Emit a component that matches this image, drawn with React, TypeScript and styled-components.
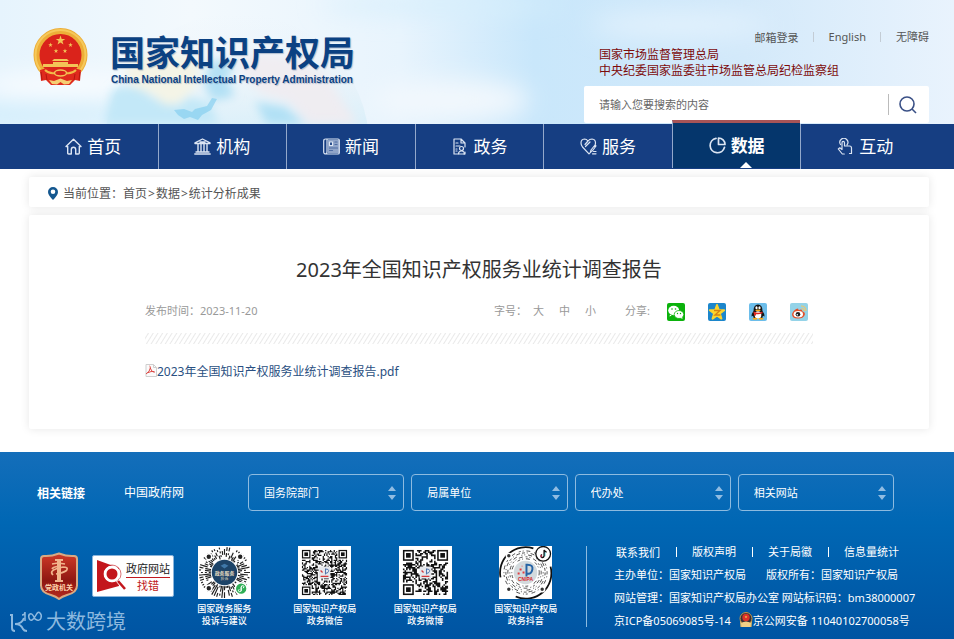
import React from "react";
import styled, { createGlobalStyle, css } from "styled-components";

const GlobalStyle = createGlobalStyle`
  * { box-sizing: border-box; }
  body {
    margin: 0;
    background: #fff;
    font-family: "Noto Sans", "Noto Sans CJK SC", sans-serif;
    font-size: 12px;
    color: #555;
  }
  a { color: inherit; text-decoration: none; }
  input, select, button { font-family: inherit; }
`;

/* ---------- header ---------- */

const Header = styled.header`
  position: relative;
  display: flex;
  justify-content: space-between;
  height: 124px;
  padding: 0 25px 0 33px;
  overflow: hidden;
`;

const Sky = styled.svg`
  position: absolute;
  inset: 0;
  width: 100%;
  height: 100%;
`;

const Brand = styled.a`
  position: relative;
  display: flex;
  align-items: flex-start;
  gap: 22px;
  padding-top: 28px;
`;

const BrandText = styled.span`
  display: flex;
  flex-direction: column;
  padding-top: 2px;
  color: #0b4182;
  text-shadow: 1px 1px 1px rgba(60, 90, 130, 0.35);
`;

const BrandName = styled.span`
  font: 700 35px/42px "Noto Sans CJK SC", sans-serif;
`;

const BrandLatin = styled.span`
  padding-left: 1px;
  font: 700 10px/16px "Liberation Sans", sans-serif;
`;

const HeaderSide = styled.div`
  position: relative;
  display: flex;
  flex-direction: column;
  width: 345px;
  padding-top: 28px;
`;

const TopLinks = styled.nav`
  display: flex;
  justify-content: flex-end;
  align-items: center;
  height: 18px;
  font-size: 11px;
  color: #555;
`;

const TopLink = styled.a`
  & + & {
    margin-left: 14px;
    padding-left: 15px;
    border-left: 1px solid #c3ccd5;
    line-height: 10px;
  }
`;

const Agencies = styled.div`
  display: flex;
  flex-direction: column;
  align-items: flex-start;
  padding: 1px 0 0 15px;
  font-size: 12px;
  line-height: 16px;
  color: #7d0b0b;
`;

const SearchForm = styled.form`
  display: flex;
  align-items: center;
  height: 37px;
  margin-top: 7px;
  padding-left: 15px;
  border-radius: 2px;
  background: #fff;
`;

const SearchInput = styled.input`
  flex: 1;
  min-width: 0;
  padding: 0;
  border: 0;
  outline: 0;
  font-size: 11px;
  color: #555;
  background: transparent;
  &::placeholder { color: #666; opacity: 1; }
`;

const SearchButton = styled.button`
  width: 41px;
  height: 21px;
  padding: 0 0 0 10px;
  border: 0;
  border-left: 1px solid #bbb;
  background: transparent;
  text-align: left;
  svg { display: block; }
`;

/* ---------- main navigation ---------- */

const NavBar = styled.nav`
  position: relative;
  display: grid;
  grid-template-columns: repeat(7, 1fr);
  height: 45px;
  padding: 0 25px 0 29px;
  background: #163e82;
`;

const NavItem = styled.a<{ $active?: boolean }>`
  position: relative;
  display: flex;
  align-items: center;
  justify-content: center;
  gap: 5px;
  color: #fff;
  font-size: 17px;
  line-height: 45px;
  & + & { border-left: 1px solid #93a8cb; }
  svg { width: 17px; height: 17px; }
  ${(p) =>
    p.$active &&
    css`
      margin: -4px 0 1px;
      border-top: 3px solid #a75457;
      background: #05366c;
      font-weight: 700;
      &::after {
        content: "";
        position: absolute;
        bottom: 0;
        left: 67px;
        border: 6px solid transparent;
        border-top: 0;
        border-bottom-color: #fff;
      }
    `}
`;

/* ---------- content ---------- */

const Main = styled.main`
  display: flex;
  flex-direction: column;
  gap: 8px;
  padding: 8px 25px 23px 29px;
`;

const Card = styled.section`
  border-radius: 2px;
  background: #fff;
  box-shadow: 0 0 10px rgba(0, 0, 0, 0.1);
`;

const Crumbs = styled(Card).attrs({ as: "nav" })`
  display: flex;
  align-items: center;
  height: 30px;
  padding: 2px 19px 0;
  font-size: 12px;
  color: #555;
  svg { margin-right: 5px; }
`;

const CrumbMark = styled.span`
  padding: 0 1px;
`;

const Article = styled(Card).attrs({ as: "article" })`
  min-height: 214px;
  padding: 40px 116px 48px;
`;

const Title = styled.h1`
  margin: 0;
  font-size: 20px;
  line-height: 30px;
  font-weight: 400;
  text-align: center;
  color: #333;
`;

const Meta = styled.div`
  display: flex;
  align-items: center;
  justify-content: space-between;
  height: 20px;
  margin-top: 15px;
  padding-right: 5px;
  font-size: 11px;
  color: #999;
`;

const Tools = styled.div`
  display: flex;
  align-items: center;
`;

const SizeButton = styled.button`
  width: 11px;
  margin-right: 15px;
  padding: 0;
  border: 0;
  background: none;
  font-size: 11px;
  color: #999;
`;

const ToolLabel = styled.span<{ $wide?: boolean }>`
  width: ${(p) => (p.$wide ? 42 : 39)}px;
  margin-left: ${(p) => (p.$wide ? 14 : 0)}px;
  white-space: nowrap;
`;

const Shares = styled.div`
  display: flex;
  gap: 23px;
  padding-top: 4px;
`;

const ShareButton = styled.button`
  width: 18px;
  height: 18px;
  padding: 0;
  border: 0;
  background: none;
  svg { display: block; }
`;

const Hatch = styled.div`
  height: 11px;
  margin-top: 13px;
  background: repeating-linear-gradient(122deg, #fff 0 2px, #e9e9e9 3px, #fff 4px);
`;

const FileLink = styled.a`
  display: inline-flex;
  align-items: center;
  margin-top: 19px;
  font-size: 12px;
  line-height: 18px;
  color: #2a5082;
  svg { margin-top: -4px; }
`;

/* ---------- footer ---------- */

const Footer = styled.footer`
  position: relative;
  height: 187px;
  padding-top: 22px;
  color: #fff;
  background: linear-gradient(#146eba 0, #0067b4 70px, #0054a2 100%);
`;

const LinkRow = styled.div`
  display: flex;
  align-items: center;
  padding: 0 60px 0 37px;
  font-size: 12px;
`;

const RowTitle = styled.strong`
  width: 87px;
`;

const GovLink = styled.a`
  width: 124px;
  padding-bottom: 2px;
`;

const Selects = styled.div`
  flex: 1;
  display: grid;
  grid-template-columns: repeat(4, 1fr);
  gap: 7px;
`;

const SelectBox = styled.label`
  position: relative;
  display: block;
  svg {
    position: absolute;
    top: 12px;
    right: 7px;
    pointer-events: none;
  }
`;

const Select = styled.select`
  display: block;
  width: 100%;
  height: 37px;
  padding: 0 15px;
  appearance: none;
  border: 1px solid #8dbbe0;
  border-radius: 4px;
  background: transparent;
  font-size: 11px;
  color: #fff;
  option { color: #333; }
`;

const InfoRow = styled.div`
  display: grid;
  grid-template-columns: 40px 95px minmax(0, 402px) 1fr;
  align-items: start;
  margin-top: 35px;
  padding-left: 39px;
`;

const PartyBadge = styled.a`
  padding-top: 6px;
  svg { display: block; }
`;

const ErrorBadge = styled.a`
  display: flex;
  width: 82px;
  height: 42px;
  margin: 9px 0 0 13px;
  border: 1px solid #8ab5dc;
  border-radius: 2px;
  background: #fff;
`;

const ErrorText = styled.span`
  display: flex;
  flex-direction: column;
  width: 44px;
  margin: 5px 0 0 -3px;
  font-size: 11px;
  line-height: 16px;
  text-align: center;
  color: #222;
  white-space: nowrap;
`;

const ErrorAction = styled.span`
  border-top: 1px solid #c01a20;
  color: #c01a20;
`;

const Codes = styled.div`
  display: grid;
  grid-template-columns: repeat(4, 1fr);
`;

const Code = styled.figure`
  display: flex;
  flex-direction: column;
  align-items: center;
  margin: 0;
  svg { display: block; }
`;

const Caption = styled.figcaption`
  margin-top: 4px;
  font-size: 9px;
  line-height: 12px;
  font-weight: 500;
  text-align: center;
  white-space: pre-line;
`;

const Legal = styled.div`
  height: 81px;
  margin-left: 10px;
  padding-left: 27px;
  border-left: 1px solid #8dbbe0;
  font-size: 11px;
  white-space: nowrap;
`;

const LegalLinks = styled.div`
  display: flex;
  align-items: center;
  height: 11px;
  margin-bottom: 5px;
  padding-left: 2px;
`;

const LegalLink = styled.a`
  & + & {
    margin-left: 16px;
    padding-left: 15px;
    border-left: 1px solid #fff;
    line-height: 10px;
  }
`;

const LegalLine = styled.div<{ $gap?: number }>`
  display: flex;
  align-items: center;
  gap: ${(p) => p.$gap ?? 0}px;
  height: 23px;
`;

const Police = styled.a`
  display: flex;
  align-items: center;
`;

const Watermark = styled.div`
  position: absolute;
  left: 9px;
  bottom: 5px;
  display: flex;
  align-items: center;
  gap: 3px;
  font-size: 20px;
  line-height: 24px;
  color: #8db9df;
`;

/* ---------- drawings ---------- */

const star = (cx: number, cy: number, r: number) =>
  Array.from({ length: 10 }, (_, i) => {
    const a = -Math.PI / 2 + (i * Math.PI) / 5;
    const q = i % 2 ? r * 0.4 : r;
    return `${(cx + q * Math.cos(a)).toFixed(2)},${(cy + q * Math.sin(a)).toFixed(2)}`;
  }).join(" ");

const SkyDrawing = () => (
  <Sky viewBox="0 0 954 124" preserveAspectRatio="none" aria-hidden="true">
    <defs>
      <linearGradient id="sky" x2="1" y2="0">
        <stop offset="0" stopColor="#e6f4fd" />
        <stop offset=".2" stopColor="#f3f9fd" />
        <stop offset=".42" stopColor="#e8f4fd" />
        <stop offset=".56" stopColor="#c9e7fb" />
        <stop offset=".78" stopColor="#d3e9fa" />
        <stop offset="1" stopColor="#e9f3fd" />
      </linearGradient>
      <linearGradient id="globe" x2="0" y2="1">
        <stop offset="0" stopColor="#eaf3fa" stopOpacity="0" />
        <stop offset=".25" stopColor="#e9f2f8" stopOpacity=".7" />
        <stop offset=".45" stopColor="#d2edf9" />
      </linearGradient>
      <filter id="soft"><feGaussianBlur stdDeviation="12" /></filter>
      <filter id="slight"><feGaussianBlur stdDeviation="5" /></filter>
    </defs>
    <rect width="954" height="124" fill="url(#sky)" />
    <g filter="url(#soft)">
      <ellipse cx="40" cy="112" rx="110" ry="8" fill="#c4e9fb" />
      <ellipse cx="60" cy="88" rx="80" ry="12" fill="#fbfdff" />
      <ellipse cx="450" cy="100" rx="80" ry="20" fill="#f2f8fd" />
      <ellipse cx="440" cy="5" rx="120" ry="9" fill="#d7effc" />
      <ellipse cx="680" cy="25" rx="90" ry="12" fill="#e3f2fd" />
    </g>
    <circle cx="237" cy="145" r="132" fill="url(#globe)" opacity=".8" />
    <g filter="url(#slight)">
      <path d="M112 90q25-10 40 8l25 8 12-9 20 5 10 22H104z" fill="#c3e8f8" />
      <path d="M210 60l25 2-8 18 8 16-22 5-9-16zM255 102l30 5 20 17h-38z" fill="#a5dcf4" opacity=".8" />
      <path d="M125 68q25-22 58-12l16 8-3 22-17 17-14 2-12-11-22-8z" fill="#f4f4e6" />
      <path d="M235 60q40-16 90 14l33 50h-50l-18-22-30-9z" fill="#f1ecf1" opacity=".9" />
    </g>
    <path d="M174 110l10-1 8 3 3-3 12-3 5-8 5 1-6 11-9 5-4 5-8-3-6 2-6-4z" fill="#7dccef" opacity=".6" />
  </Sky>
);

const Emblem = () => (
  <svg width="55" height="59" viewBox="0 0 55 59" role="img" aria-label="国徽">
    <circle cx="27.500" cy="27" r="24" fill="#da231b" stroke="#edae38" strokeWidth="6" />
    <circle cx="27.500" cy="27" r="25" fill="none" stroke="#f6c95a" strokeWidth="2" />
    <path d="M7 42l7-2q13 8 27 0l7 2-1 11-5-1-5 5H18l-5-5-5 1z" fill="#df2a1d" />
    <g fill="#f3c357">
      <polygon points={star(27.5, 12.5, 5)} />
      <polygon points={star(17.5, 17, 2.4)} />
      <polygon points={star(37.5, 17, 2.4)} />
      <polygon points={star(23, 23, 2.4)} />
      <polygon points={star(32, 23, 2.4)} />
      <path d="M21 31h13l2 2H19zM20 34h15v2H20zM10 36h35v3H10z" />
    </g>
    <path d="M12 42q4 4 10 3M43 42q-4 4-10 3" stroke="#f1ba48" strokeWidth="2" fill="none" />
    <ellipse cx="27.500" cy="45" rx="6" ry="3" fill="#da231b" stroke="#f3c357" strokeWidth="1.500" />
    <path d="M16 52l5 1 6.500-2.500L34 53l5-1-3 4-5 .5-3.500-2.500L24 56.500l-5-.5z" fill="#f5cf73" />
    <path d="M8 44l1 8M47 44l-1 8M13 46l1 6M42 46l-1 6" stroke="#b3160f" strokeWidth="1" />
  </svg>
);

const navIcon = {
  viewBox: "0 0 17 17",
  fill: "none",
  stroke: "#dce5f3",
  strokeWidth: 1.4,
  strokeLinecap: "round" as const,
  strokeLinejoin: "round" as const,
  "aria-hidden": true,
};

const HomeIcon = () => (
  <svg {...navIcon}><path d="M1 8.500L8.500 1.300 16 8.500h-1.700V15q0 1-1 1h-2.600v-4.500q0-2.200-2.200-2.200T6.300 11.500V16H3.700q-1 0-1-1V8.500z" /></svg>
);
const HallIcon = () => (
  <svg {...navIcon}><path d="M1 4.800L8.500 1 16 4.800v.7H1zM2 14h13M.8 16h15.400M4 6v7.500M7 6v7.500M10 6v7.500M13 6v7.500M6 4h5" /></svg>
);
const NewsIcon = () => (
  <svg {...navIcon} strokeWidth={1.2}>
    <path d="M5 2h11v13H5z" fill="#8fa4c8" stroke="none" />
    <path d="M4 1h11q1.300 0 1.300 1.300v12.400q0 1.300-1.300 1.300H3q-2.300 0-2.300-2V3q0-2 2-2H4v12.500Q4 16 2.500 16" />
    <path d="M6.500 4h3v3.500h-3z" fill="#163e82" />
    <path d="M12 4h2M12 6.500h2M6.500 10h8M6.500 12.500h3" stroke="#4f6da4" />
  </svg>
);
const DocIcon = () => (
  <svg {...navIcon} strokeWidth={1.2}>
    <path d="M14 9V5l-4-4H3v15h4M13 16h1v-2M10 1v4h4M5 5h2M5 8h4M5 11h1M5 13h1" />
    <circle cx="10.500" cy="10.500" r="2" /><path d="M7.500 16q0-3 3-3t3 3z" />
  </svg>
);
const HeartIcon = () => (
  <svg {...navIcon} strokeWidth={1.2}>
    <path d="M8 3Q6.500 1 4.500 1 1 1.300 1 5q0 2 1.500 4L9 15.800l2-2M8 3q1.500-2 4-2 3.500.3 3.500 4 0 1.800-1 3.300M8 3L5 6.500M5.500 8.500L10 4M11 12l4-5 1 1-3.700 5-1.800.8zM13.500 13.500H16M12.500 15.800H16" />
  </svg>
);
const PieIcon = () => (
  <svg {...navIcon} strokeWidth={1.7}><path d="M7 1.300a7.300 7.300 0 1 0 8.500 9M9.500 1v6.500H16A6.500 6.500 0 0 0 9.500 1z" /></svg>
);
const TouchIcon = () => (
  <svg {...navIcon} strokeWidth={1.2}>
    <path d="M3.500 6.500A4 4 0 1 1 10 6.800M5 11.500V4.700q0-1.300 1.200-1.300t1.300 1.300V8h5q2 0 2 2v5.500h-2M5 11.500L2.800 9.800 1.300 11l4 5h2" />
  </svg>
);

const NAV = [
  { label: "首页", Icon: HomeIcon },
  { label: "机构", Icon: HallIcon },
  { label: "新闻", Icon: NewsIcon },
  { label: "政务", Icon: DocIcon },
  { label: "服务", Icon: HeartIcon },
  { label: "数据", Icon: PieIcon, active: true },
  { label: "互动", Icon: TouchIcon },
];

const WechatIcon = () => (
  <svg width="18" height="18" viewBox="0 0 18 18">
    <rect width="18" height="18" rx="2" fill="#0bb20c" />
    <path d="M3 11.500l-.5 2 2.200-1z" fill="#fff" />
    <ellipse cx="6.700" cy="7.500" rx="5.500" ry="4.700" fill="#fff" />
    <ellipse cx="12" cy="11.500" rx="4.800" ry="4" fill="#fff" stroke="#0bb20c" strokeWidth=".8" />
    <path d="M13 14.500l2.500 1.500-.4-2z" fill="#fff" />
    <g fill="#0bb20c"><circle cx="5" cy="6" r=".8" /><circle cx="8.500" cy="6" r=".8" /><circle cx="10.500" cy="10.500" r=".7" /><circle cx="13.500" cy="10.500" r=".7" /></g>
  </svg>
);
const QzoneIcon = () => (
  <svg width="18" height="18" viewBox="0 0 18 18">
    <rect width="18" height="18" rx="2" fill="#1c86cb" />
    <polygon points={star(9, 9.5, 7.5)} fill="#fcd42c" stroke="#fcd42c" strokeWidth="2" strokeLinejoin="round" />
    <path d="M6 7.500h6L7 12h5.500" fill="none" stroke="#d48212" strokeWidth="1.400" />
  </svg>
);
const QqIcon = () => (
  <svg width="18" height="18" viewBox="0 0 18 18">
    <rect width="18" height="18" rx="2" fill="#6cbdea" />
    <path d="M4.500 8Q4.500 1.500 9 1.500T13.500 8q2 2.500 2 5.500l-1.500-.7-1 2.700H5l-1-2.700-1.500.7q0-3 2-5.500z" fill="#151515" />
    <ellipse cx="9" cy="12" rx="3.300" ry="3.800" fill="#fff" />
    <ellipse cx="7.500" cy="4.800" rx="1.100" ry="1.500" fill="#fff" /><ellipse cx="10.500" cy="4.800" rx="1.100" ry="1.500" fill="#fff" />
    <ellipse cx="9" cy="7.300" rx="2.700" ry=".9" fill="#f6ac1c" />
    <path d="M4.500 8.500q4.500 2.500 9 0v1.700q-4.500 2-9 0zM5 10h2v2.500H5z" fill="#df2a22" />
    <ellipse cx="6" cy="15.800" rx="2.500" ry="1" fill="#f6ac1c" /><ellipse cx="12" cy="15.800" rx="2.500" ry="1" fill="#f6ac1c" />
  </svg>
);
const WeiboIcon = () => (
  <svg width="18" height="18" viewBox="0 0 18 18">
    <rect width="18" height="18" rx="2" fill="#94d3e8" />
    <path d="M2 11q2-5 6-5.500l.7 1.500q4-1.500 3.500 1.300Q15 9 15 11q-1 4.500-7 4.500T2 11z" fill="#e4512b" />
    <ellipse cx="8.300" cy="11.200" rx="4.700" ry="3.300" fill="#fff" />
    <circle cx="8" cy="11.300" r="2.300" fill="#222" /><circle cx="7.300" cy="11.800" r=".8" fill="#fff" />
    <path d="M11.500 5.500q2.700 0 2.700 2.700M11 3q5 0 5 5" fill="none" stroke="#f0c66b" strokeWidth="1.200" />
  </svg>
);

const PdfIcon = () => (
  <svg width="12" height="13" viewBox="0 0 12 13" aria-hidden="true">
    <path d="M1 .5h7.500l3 3v9H1z" fill="#fbfafa" stroke="#cfcfcf" />
    <path d="M8.500.5v3h3" fill="none" stroke="#cfcfcf" />
    <path d="M4.500 2q1 0 .8 2Q5 7.500 1 10M5.300 4Q6 7.500 9.500 8.500M2.500 8.800Q6 7 9.500 7.500" fill="none" stroke="#dd4a46" strokeWidth="1" />
  </svg>
);

const PartyDrawing = () => (
  <svg width="40" height="48" viewBox="0 0 40 48" role="img" aria-label="党政机关">
    <defs>
      <linearGradient id="shield" x2="0" y2="1"><stop stopColor="#cf3a28" /><stop offset=".6" stopColor="#8e1712" /><stop offset="1" stopColor="#b52b1f" /></linearGradient>
    </defs>
    <path d="M20 1.500q8 3 15 2.500 3 0 3 3v26.500q0 7-10 9.500-5 1.500-8 4-3-2.500-8-4Q2 40.500 2 33.500V7q0-3 3-3 7 .5 15-2.500z" fill="url(#shield)" stroke="#d9a982" strokeWidth="2" />
    <path d="M16 7h8v2h-8zM18 9h4v19h-4zM16 28h8v2h-8z" fill="#f1b48c" />
    <path d="M13 12l6-1 7 1M14 23q-4-4 4-6.500l6-1.500q6 0 3.500 3.500Q24 21 17 22M13 17q1-2 5-2.500" fill="none" stroke="#f1b48c" strokeWidth="1.700" />
    <text x="20" y="38" textAnchor="middle" fontSize="7" fontWeight="700" fontFamily="Noto Sans CJK SC, sans-serif" fill="#ffd5ad">党政机关</text>
  </svg>
);

const FindDrawing = () => (
  <svg width="36" height="40" viewBox="0 0 36 40" aria-hidden="true">
    <path d="M4 4l22 8v18L4 36z" fill="#c3161c" />
    <circle cx="19" cy="18" r="7" fill="#c3161c" stroke="#fff" strokeWidth="3" />
    <circle cx="19" cy="18" r="9" fill="none" stroke="#c3161c" strokeWidth=".6" />
    <path d="M25 24l7 9" stroke="#fff" strokeWidth="5" /><path d="M25 25l7 8" stroke="#c3161c" strokeWidth="2.500" />
  </svg>
);

const noise = (n: number) => {
  const v = Math.sin(n * 12.9898) * 43758.5453;
  return v - Math.floor(v);
};

const SquareCode = ({ size, seed }: { size: number; seed: number }) => {
  const cell = 46 / size;
  let d = "";
  const finder = (x: number, y: number) => x >= 0 && x < 8 && y >= 0 && y < 8;
  for (let y = 0; y < size; y++)
    for (let x = 0; x < size; x++) {
      if (finder(x, y) || finder(size - 1 - x, y) || finder(x, size - 1 - y)) continue;
      if (noise(x * 31 + y * 57 + seed) > 0.48) d += `M${4 + x * cell} ${4 + y * cell}h${cell}v${cell}h-${cell}z`;
    }
  const far = size - 7;
  return (
    <svg width="53" height="53" viewBox="0 0 54 54" aria-hidden="true">
      <rect width="54" height="54" fill="#fff" />
      <path d={d} fill="#111" />
      {[[0, 0], [far, 0], [0, far]].map(([x, y]) => (
        <g key={`${x}-${y}`} transform={`translate(${4 + x * cell} ${4 + y * cell}) scale(${cell})`} fill="#111">
          <rect x=".5" y=".5" width="6" height="6" fill="#fff" stroke="#111" />
          <rect x="2" y="2" width="3" height="3" />
        </g>
      ))}
      <rect x="21" y="21" width="12" height="12" rx="1" fill="#e6e8ec" />
      <path d="M28 23v6M28 23.500q4 0 3 2.500t-3 1.500" stroke="#4a6fa8" fill="none" />
      <path d="M23 25l2 2M23 31h8" stroke="#d5383b" strokeWidth="1.300" />
    </svg>
  );
};

const rings = (from: number, to: number, step: number, seed: number, cut: number) => {
  let d = "";
  for (let i = 0; i < 60; i++)
    for (let r = from; r < to; r += step) {
      if (noise(i * 17 + r * 7 + seed) < cut) continue;
      const a = (i * Math.PI) / 30;
      d += `M${27 + r * Math.cos(a)} ${27 + r * Math.sin(a)}L${27 + (r + step) * Math.cos(a)} ${27 + (r + step) * Math.sin(a)}`;
    }
  return d;
};

const MiniCode = () => (
  <svg width="53" height="53" viewBox="0 0 54 54" aria-hidden="true">
    <rect width="54" height="54" fill="#fff" />
    <path d={rings(14, 26, 2, 3, 0.46)} stroke="#222" strokeWidth="1.200" />
    {[[11, 11], [43, 11], [11, 43]].map(([x, y]) => <circle key={`${x}-${y}`} cx={x} cy={y} r="3" fill="#222" stroke="#fff" strokeWidth="1.500" />)}
    <circle cx="27" cy="27" r="13" fill="#1d4468" />
    <path d="M23 20l4-2 4 2-4 3z" fill="#3f78a8" />
    <text x="27" y="30" textAnchor="middle" fontSize="5" fontWeight="700" fontFamily="Noto Sans CJK SC, sans-serif" fill="#e8dfc2">政务服务</text>
    <text x="27" y="35" textAnchor="middle" fontSize="4" fontFamily="Noto Sans CJK SC, sans-serif" fill="#e8dfc2">投诉</text>
    <circle cx="44" cy="43.500" r="6" fill="#2fae56" stroke="#fff" strokeWidth="1.500" />
    <path d="M44 46v-4q0-2 2-1.500t0 2.500M44 42v3q0 2-2 1.500t0-2.500" fill="none" stroke="#fff" />
  </svg>
);

const DouyinCode = () => (
  <svg width="53" height="53" viewBox="0 0 54 54" aria-hidden="true">
    <rect width="54" height="54" fill="#fff" />
    <path d="M35 2.500A26 26 0 0 0 1.500 32M52.500 21A26 26 0 0 1 17 51.500" fill="none" stroke="#111" strokeWidth="1.800" />
    {[14, 16, 18, 20, 22].map((r) => (
      <circle key={r} cx="27" cy="27" r={r} fill="none" stroke="#333" strokeWidth=".9" strokeDasharray={`${1 + (r % 3)} 2 1 3 4 ${2 + (r % 5)}`} />
    ))}
    {[[10, 10], [10, 44], [44, 44]].map(([x, y]) => <circle key={`${x}-${y}`} cx={x} cy={y} r="2.500" fill="#333" stroke="#fff" strokeWidth="1.500" />)}
    <circle cx="27" cy="27" r="12" fill="#d3dadd" />
    <path d="M28 18v13M29 19q6 0 5 5t-5 4" fill="none" stroke="#2563a5" strokeWidth="2" />
    <path d="M21 23h2v2h-2zM24 26h2v2h-2zM23 20h1v1h-1zM19 27h2v2h-2z" fill="#e23c40" />
    <text x="27" y="36" textAnchor="middle" fontSize="5" fontWeight="700" fontFamily="Liberation Sans, sans-serif" fill="#d3222b">CNIPA</text>
    <circle cx="45" cy="8" r="7.500" fill="#fff" stroke="#111" strokeWidth="1.300" />
    <path d="M46 4v6q-.5 2-2.200 1.700T43.500 8.500M46 4q.5 2 2.500 2" fill="none" stroke="#111" strokeWidth="1.500" />
    <path d="M43 9v2.500" stroke="#e6284e" /><path d="M47 6.500v4" stroke="#27cdd3" strokeWidth=".7" />
  </svg>
);

const PoliceIcon = () => (
  <svg width="14" height="16" viewBox="0 0 14 16" aria-hidden="true">
    <path d="M1 9h12l-.5 6h-11z" fill="#e7bd66" />
    <circle cx="7" cy="6.500" r="6" fill="#3b3035" stroke="#c99745" />
    <circle cx="7" cy="5.500" r="3.700" fill="#dc3127" />
    <polygon points={star(7, 5, 1.5)} fill="#f6cf51" />
    <path d="M2 11q5-3 10 0l-1 4H3z" fill="#f2d187" />
  </svg>
);

const Arrows = () => (
  <svg width="10" height="14" viewBox="0 0 10 14" aria-hidden="true">
    <path d="M1 5l4-5 4 5zM1 9h8l-4 5z" fill="#90bce2" />
  </svg>
);

const SELECTS = ["国务院部门", "局属单位", "代办处", "相关网站"];
const CODES = [
  { caption: "国家政务服务\n投诉与建议", code: <MiniCode /> },
  { caption: "国家知识产权局\n政务微信", code: <SquareCode size={37} seed={5} /> },
  { caption: "国家知识产权局\n政务微博", code: <SquareCode size={29} seed={11} /> },
  { caption: "国家知识产权局\n政务抖音", code: <DouyinCode /> },
];
const SHARES = [
  { name: "微信", Icon: WechatIcon },
  { name: "QQ空间", Icon: QzoneIcon },
  { name: "QQ", Icon: QqIcon },
  { name: "微博", Icon: WeiboIcon },
];

export default function App() {
  return (
    <>
      <GlobalStyle />
      <Header>
        <SkyDrawing />
        <Brand href="#">
          <Emblem />
          <BrandText>
            <BrandName>国家知识产权局</BrandName>
            <BrandLatin>China National Intellectual Property Administration</BrandLatin>
          </BrandText>
        </Brand>
        <HeaderSide>
          <TopLinks>
            {["邮箱登录", "English", "无障碍"].map((t) => <TopLink key={t} href="#">{t}</TopLink>)}
          </TopLinks>
          <Agencies>
            <a href="#">国家市场监督管理总局</a>
            <a href="#">中央纪委国家监委驻市场监管总局纪检监察组</a>
          </Agencies>
          <SearchForm>
            <SearchInput type="text" placeholder="请输入您要搜索的内容" aria-label="搜索" />
            <SearchButton type="button" aria-label="搜索">
              <svg width="18" height="18" viewBox="0 0 18 18" fill="none" stroke="#3a5086" strokeWidth="1.600">
                <circle cx="8" cy="8" r="7" /><path d="M13 13l4 4" />
              </svg>
            </SearchButton>
          </SearchForm>
        </HeaderSide>
      </Header>

      <NavBar>
        {NAV.map(({ label, Icon, active }) => (
          <NavItem key={label} href="#" $active={active}><Icon />{label}</NavItem>
        ))}
      </NavBar>

      <Main>
        <Crumbs>
          <svg width="10" height="13" viewBox="0 0 10 13" aria-hidden="true">
            <path d="M5 0a5 5 0 0 1 5 5q0 3-5 8-5-5-5-8a5 5 0 0 1 5-5zm0 2.500a2.300 2.300 0 1 0 0 4.600 2.300 2.300 0 0 0 0-4.600z" fill="#14578f" />
          </svg>
          当前位置：<a href="#">首页</a><CrumbMark>&gt;</CrumbMark><a href="#">数据</a><CrumbMark>&gt;</CrumbMark><a href="#">统计分析成果</a>
        </Crumbs>
        <Article>
          <Title>2023年全国知识产权服务业统计调查报告</Title>
          <Meta>
            <span>发布时间：2023-11-20</span>
            <Tools>
              <ToolLabel>字号：</ToolLabel>
              {["大", "中", "小"].map((s) => <SizeButton key={s} type="button">{s}</SizeButton>)}
              <ToolLabel $wide>分享:</ToolLabel>
              <Shares>
                {SHARES.map(({ name, Icon }) => (
                  <ShareButton key={name} type="button" aria-label={name}><Icon /></ShareButton>
                ))}
              </Shares>
            </Tools>
          </Meta>
          <Hatch />
          <FileLink href="#"><PdfIcon />2023年全国知识产权服务业统计调查报告.pdf</FileLink>
        </Article>
      </Main>

      <Footer>
        <LinkRow>
          <RowTitle>相关链接</RowTitle>
          <GovLink href="#">中国政府网</GovLink>
          <Selects>
            {SELECTS.map((s) => (
              <SelectBox key={s}>
                <Select aria-label={s}><option>{s}</option></Select>
                <Arrows />
              </SelectBox>
            ))}
          </Selects>
        </LinkRow>
        <InfoRow>
          <PartyBadge href="#"><PartyDrawing /></PartyBadge>
          <ErrorBadge href="#">
            <FindDrawing />
            <ErrorText>政府网站<ErrorAction>找错</ErrorAction></ErrorText>
          </ErrorBadge>
          <Codes>
            {CODES.map(({ caption, code }) => (
              <Code key={caption}>{code}<Caption>{caption}</Caption></Code>
            ))}
          </Codes>
          <Legal>
            <LegalLinks>
              {["联系我们", "版权声明", "关于局徽", "信息量统计"].map((t) => <LegalLink key={t} href="#">{t}</LegalLink>)}
            </LegalLinks>
            <LegalLine $gap={20}><span>主办单位：国家知识产权局</span><span>版权所有：国家知识产权局</span></LegalLine>
            <LegalLine>网站管理：国家知识产权局办公室 网站标识码：bm38000007</LegalLine>
            <LegalLine $gap={8}>
              <a href="#">京ICP备05069085号-14</a>
              <Police href="#"><PoliceIcon />京公网安备 11040102700058号</Police>
            </LegalLine>
          </Legal>
        </InfoRow>
        <Watermark>
          <svg width="34" height="23" viewBox="0 0 34 23" fill="none" stroke="#8db9df" strokeWidth="2" aria-hidden="true">
            <path d="M1 4h2v13q0 3 3 3M15 7q-2 6-9 6 6 0 8 5 1 2 4 2" />
            <path d="M13 4q3 0 3-3v9M25 6q-2-4-4-3t-1 4 3 2 4-5 4-2 1 5-4 2-3-3z" strokeWidth="1.500" />
          </svg>
          大数跨境
        </Watermark>
      </Footer>
    </>
  );
}
